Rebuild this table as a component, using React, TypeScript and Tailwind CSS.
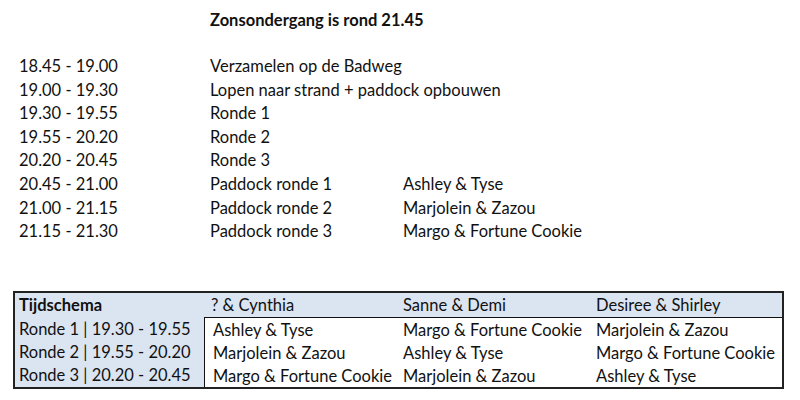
import React from "react";

const rows: [string, string, string][] = [
  ["18.45 - 19.00", "Verzamelen op de Badweg", ""],
  ["19.00 - 19.30", "Lopen naar strand + paddock opbouwen", ""],
  ["19.30 - 19.55", "Ronde 1", ""],
  ["19.55 - 20.20", "Ronde 2", ""],
  ["20.20 - 20.45", "Ronde 3", ""],
  ["20.45 - 21.00", "Paddock ronde 1", "Ashley & Tyse"],
  ["21.00 - 21.15", "Paddock ronde 2", "Marjolein & Zazou"],
  ["21.15 - 21.30", "Paddock ronde 3", "Margo & Fortune Cookie"],
];

const table: [string, string, string, string][] = [
  ["Ronde 1 | 19.30 - 19.55", "Ashley & Tyse", "Margo & Fortune Cookie", "Marjolein & Zazou"],
  ["Ronde 2 | 19.55 - 20.20", "Marjolein & Zazou", "Ashley & Tyse", "Margo & Fortune Cookie"],
  ["Ronde 3 | 20.20 - 20.45", "Margo & Fortune Cookie", "Marjolein & Zazou", "Ashley & Tyse"],
];

export default function App() {
  return (
    <div
      className="w-[800px] h-[400px] bg-white text-[#111] text-[16.5px] overflow-hidden whitespace-nowrap"
      style={{ fontFamily: "Lato, 'Open Sans', sans-serif" }}
    >
      <div className="pt-[8px] pl-[210px] font-bold leading-[24px]">Zonsondergang is rond 21.45</div>
      <div className="mt-[23px] pl-[19px]">
        {rows.map((r, i) => (
          <div key={i} className="flex leading-[23.6px]">
            <div className="w-[191px] shrink-0">{r[0]}</div>
            <div className="w-[193px] shrink-0">{r[1]}</div>
            <div>{r[2]}</div>
          </div>
        ))}
      </div>
      <div className="mt-[47px] ml-[13px] w-[771px] border-2 border-[#222] bg-[#dbe5f1] leading-[24px]">
        <div className="flex h-[24px]">
          <div className="w-[189px] pl-[4px] font-bold">Tijdschema</div>
          <div className="w-[191px] pl-[7px]">? &amp; Cynthia</div>
          <div className="w-[193px] pl-[8px]">Sanne &amp; Demi</div>
          <div className="flex-1 pl-[8px]">Desiree &amp; Shirley</div>
        </div>
        <div className="flex">
          <div className="w-[189px] pl-[4px]">
            {table.map((t, i) => (
              <div key={i} className="h-[23px]">{t[0]}</div>
            ))}
          </div>
          <div className="flex-1 bg-white border-l border-t border-[#111]">
            {table.map((t, i) => (
              <div key={i} className="flex h-[23px]">
                <div className="w-[190px] pl-[8px]">{t[1]}</div>
                <div className="w-[193px] pl-[8px]">{t[2]}</div>
                <div className="flex-1 pl-[8px]">{t[3]}</div>
              </div>
            ))}
          </div>
        </div>
      </div>
    </div>
  );
}
